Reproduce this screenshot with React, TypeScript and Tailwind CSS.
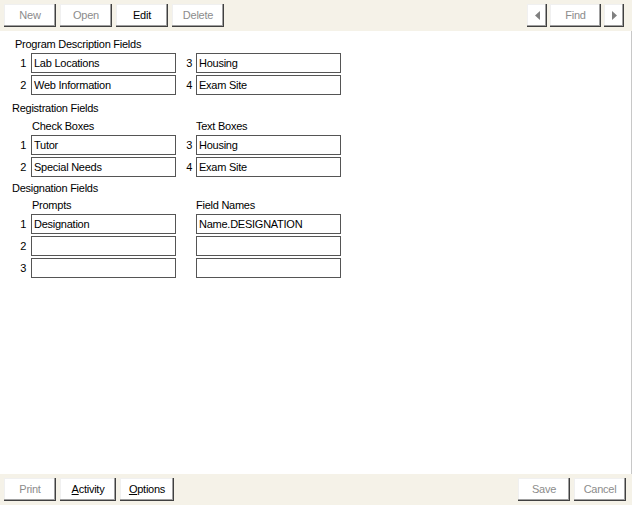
import React from "react";

const btn =
  "flex h-[23px] items-center justify-center bg-white shadow-[inset_-1px_-1px_0_#404040,inset_-2px_-2px_0_#a0a0a0,inset_1px_1px_0_#f0f0f0]";

function Btn({ w, label, disabled, u }: { w: string; label: string; disabled?: boolean; u?: boolean }) {
  return (
    <div className={`${btn} ${w} ${disabled ? "text-[#8c8c8c]" : "text-black"}`}>
      {u ? (
        <span>
          <span className="underline">{label[0]}</span>
          {label.slice(1)}
        </span>
      ) : (
        label
      )}
    </div>
  );
}

function Field({ value }: { value?: string }) {
  return (
    <div className="ml-[3px] flex h-[20px] w-[145px] items-center border border-[#555555] bg-white pl-[2px]">
      {value}
    </div>
  );
}

function Row({ n1, v1, n2, v2 }: { n1: number; v1?: string; n2?: number; v2?: string }) {
  return (
    <div className="flex items-center">
      <span className="w-[16px] pr-[2px] text-right">{n1}</span>
      <Field value={v1} />
      <span className="w-[17px] pr-[1px] text-right">{n2}</span>
      <Field value={v2} />
    </div>
  );
}

function Label({ children, className }: { children: React.ReactNode; className?: string }) {
  return <div className={`h-[14px] leading-[14px] ${className ?? ""}`}>{children}</div>;
}

function SubLabels({ a, b }: { a: string; b: string }) {
  return (
    <div className="flex h-[14px] leading-[14px]">
      <span className="ml-[20px] w-[164px]">{a}</span>
      <span>{b}</span>
    </div>
  );
}

export default function App() {
  return (
    <div
      className="flex h-[505px] w-[632px] flex-col bg-white text-[11px] tracking-[-0.25px] text-black"
      style={{ fontFamily: '"Liberation Sans", Arial, sans-serif' }}
    >
      {/* top toolbar */}
      <div className="flex h-[31px] items-center bg-[#f5f2e8] px-[4px]">
        <div className="flex gap-[4px]">
          <Btn w="w-[52px]" label="New" disabled />
          <Btn w="w-[52px]" label="Open" disabled />
          <Btn w="w-[52px]" label="Edit" />
          <Btn w="w-[52px]" label="Delete" disabled />
        </div>
        <div className="ml-auto mr-[4px] flex gap-[3px]">
          <div className={`${btn} w-[20px]`}>
            <svg width="5" height="9" viewBox="0 0 5 9">
              <path d="M5 0L0 4.5L5 9Z" fill="#808080" />
            </svg>
          </div>
          <Btn w="w-[51px]" label="Find" disabled />
          <div className={`${btn} w-[20px]`}>
            <svg width="5" height="9" viewBox="0 0 5 9">
              <path d="M0 0L5 4.5L0 9Z" fill="#808080" />
            </svg>
          </div>
        </div>
      </div>

      {/* form */}
      <div className="flex-1 border-r border-[#c8c8c8] pl-[12px] pt-[6px]">
        <Label className="pl-[3px]">Program Description Fields</Label>
        <div className="mt-[2px] flex flex-col gap-[2px]">
          <Row n1={1} v1="Lab Locations" n2={3} v2="Housing" />
          <Row n1={2} v1="Web Information" n2={4} v2="Exam Site" />
        </div>

        <Label className="mt-[6px]">Registration Fields</Label>
        <div className="mt-[4px]">
          <SubLabels a="Check Boxes" b="Text Boxes" />
        </div>
        <div className="mt-[2px] flex flex-col gap-[2px]">
          <Row n1={1} v1="Tutor" n2={3} v2="Housing" />
          <Row n1={2} v1="Special Needs" n2={4} v2="Exam Site" />
        </div>

        <Label className="mt-[4px]">Designation Fields</Label>
        <div className="mt-[3px]">
          <SubLabels a="Prompts" b="Field Names" />
        </div>
        <div className="mt-[2px] flex flex-col gap-[2px]">
          <Row n1={1} v1="Designation" v2="Name.DESIGNATION" />
          <Row n1={2} />
          <Row n1={3} />
        </div>
      </div>

      {/* bottom toolbar */}
      <div className="flex h-[31px] items-center bg-[#f5f2e8] px-[4px]">
        <div className="flex gap-[4px]">
          <Btn w="w-[52px]" label="Print" disabled />
          <Btn w="w-[56px]" label="Activity" u />
          <Btn w="w-[54px]" label="Options" u />
        </div>
        <div className="ml-auto mr-[2px] flex gap-[4px]">
          <Btn w="w-[52px]" label="Save" disabled />
          <Btn w="w-[52px]" label="Cancel" disabled />
        </div>
      </div>
    </div>
  );
}
